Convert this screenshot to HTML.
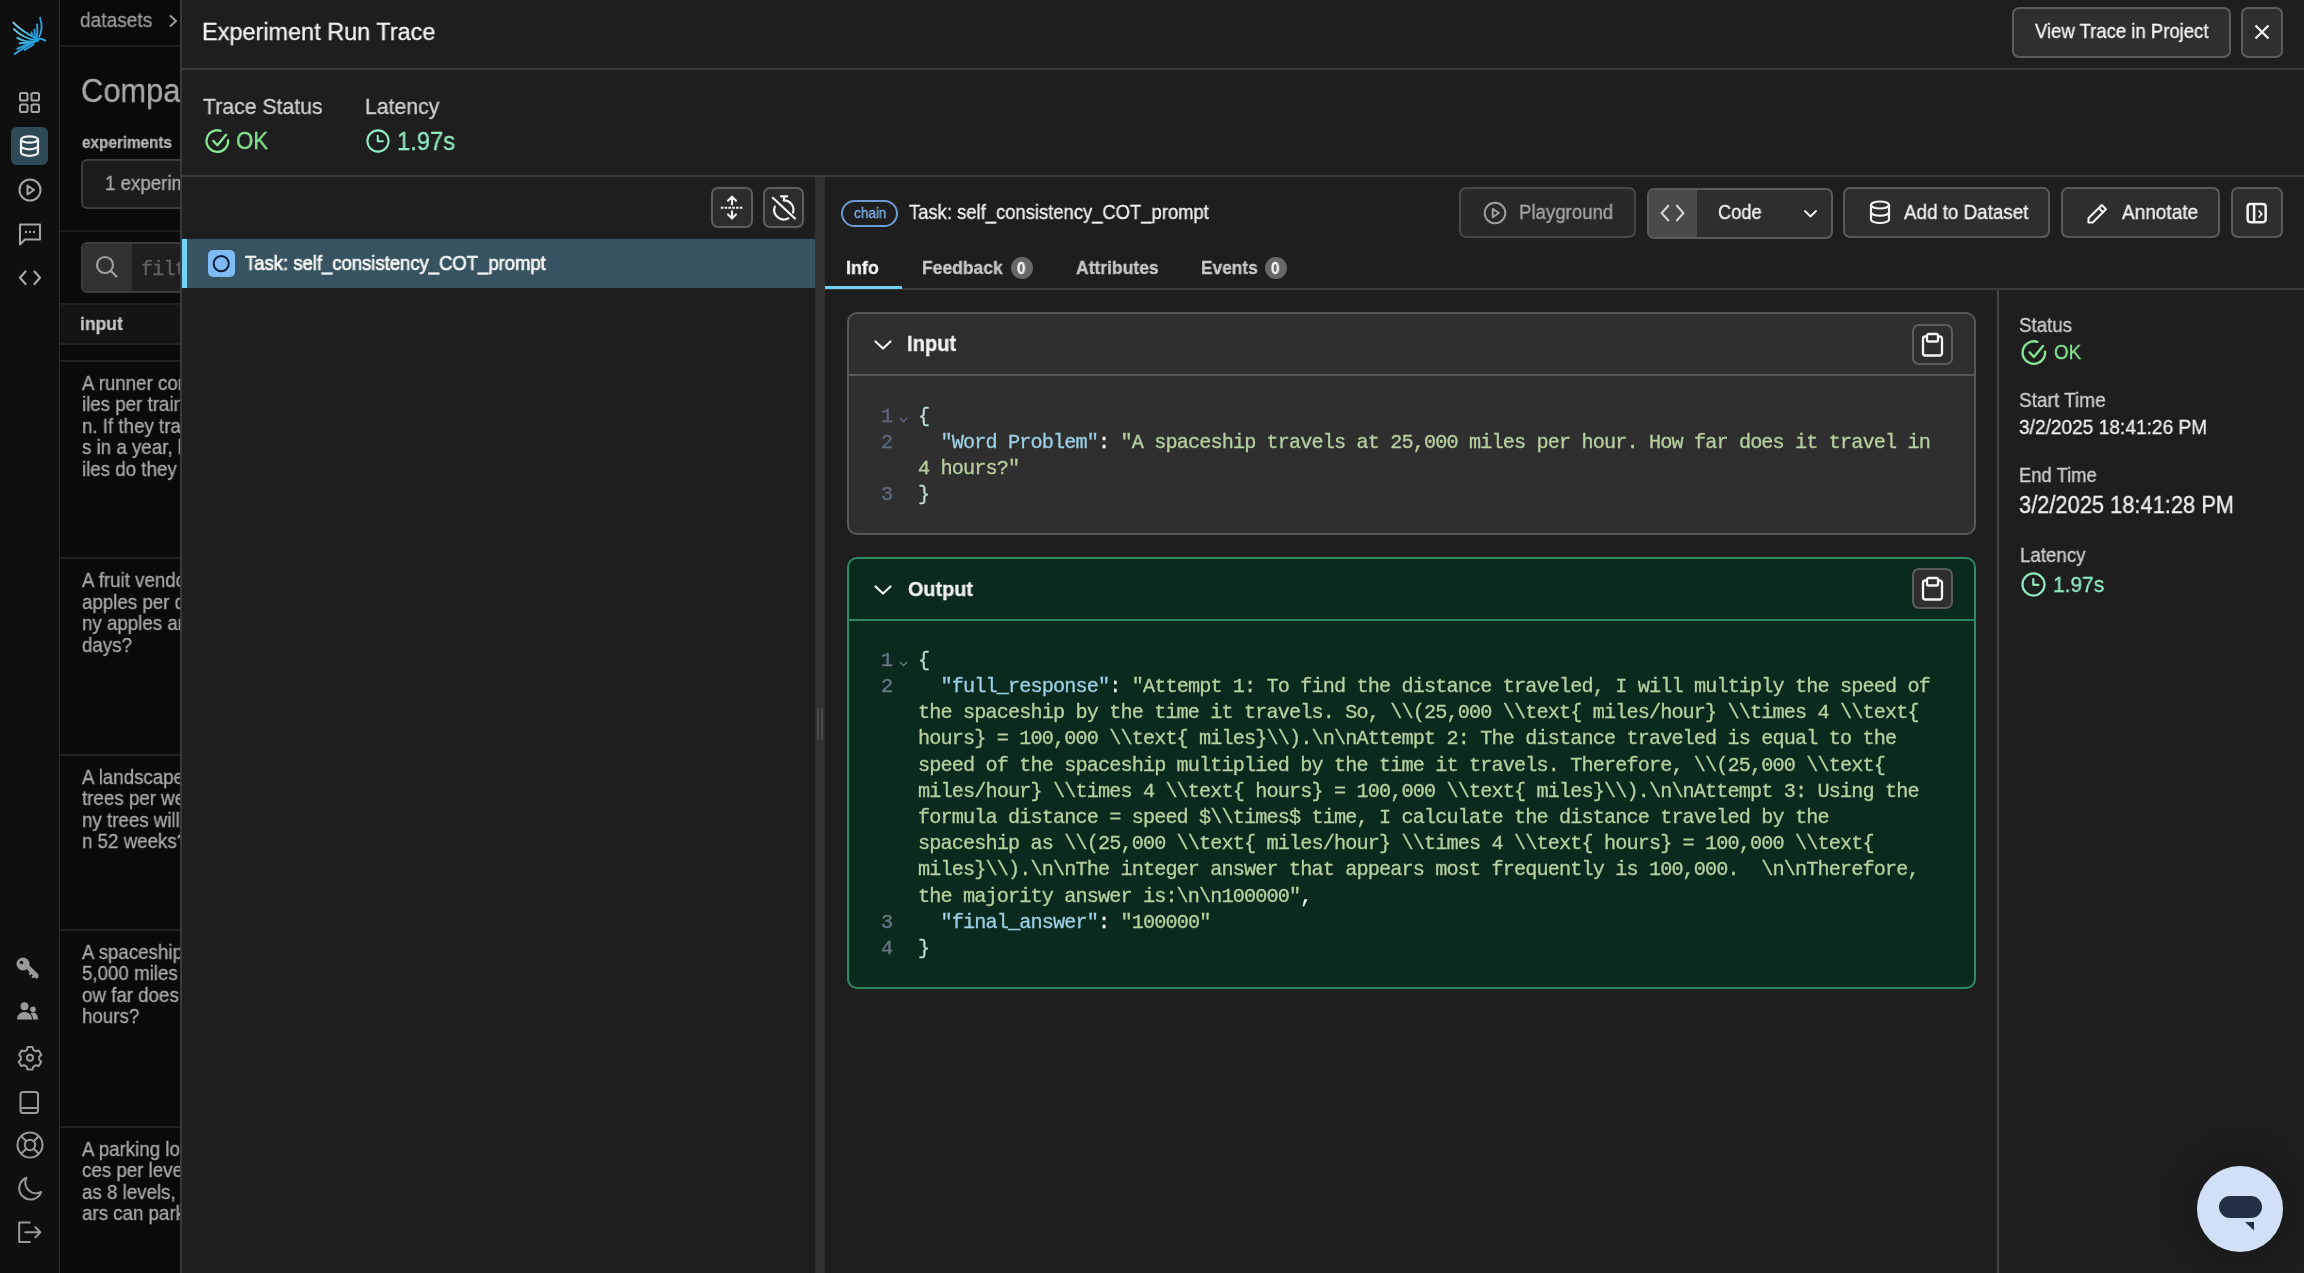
<!DOCTYPE html>
<html><head><meta charset="utf-8">
<style>
*{box-sizing:border-box;margin:0;padding:0}
html,body{width:2304px;height:1273px;overflow:hidden;background:#1e1e1e}
body{position:relative}
.t{position:absolute;white-space:pre;line-height:1;transform-origin:0 0;will-change:transform;-webkit-text-stroke:0.3px currentColor}
.s{font-family:"Liberation Sans",sans-serif}
.m{font-family:"Liberation Mono",monospace}
.b{font-weight:700}
.bm{display:inline-block;width:0;height:0}
.r{position:absolute}
svg{position:absolute;overflow:visible}
</style></head><body>
<div class="r" style="left:0px;top:0px;width:59px;height:1273px;background:#0f0f0f;border-radius:0px;"></div>
<div class="r" style="left:59px;top:0px;width:1px;height:1273px;background:#2e2e2e;border-radius:0px;"></div>
<svg style="left:5px;top:10px;" width="50" height="50" viewBox="5 10 50 50"><defs><linearGradient id="lg" x1="13" y1="22" x2="38" y2="40" gradientUnits="userSpaceOnUse"><stop offset="0" stop-color="#8bd8e6"/><stop offset="1" stop-color="#1d9fdc"/></linearGradient></defs>
<g fill="none" stroke="url(#lg)" stroke-width="1.9" stroke-linecap="round">
<path d="M13.4 22.6 C17 26.5 21 30 30.1 35.1 S35 38.3 36.7 38.9"/>
<path d="M13.9 29.2 C17 32.5 20 34.5 24 36.5 S32 39.6 35.7 40.3"/>
<path d="M17.3 37.9 C20 39.5 23 41 27 41.4 S33 41.5 35 41.3"/>
<path d="M19.4 43.4 C24 42.8 30 42.6 34.3 42.3"/>
<path d="M40.1 17.8 C41.4 22 41.8 26 41.5 29 S40.5 34.5 39.1 36.8" stroke="#2aa3dc"/>
<path d="M37 24.4 C37.6 28 37.5 33 36.7 37.5" stroke="#2aa3dc"/>
<path d="M34.4 29.6 C34.8 32 34.8 35 34.6 37.5" stroke="#2aa3dc"/>
<path d="M31.5 32.3 C31.8 33.5 32 35 32.2 36.1" stroke="#2aa3dc"/>
<path d="M37 39.6 C39.5 38.2 42 38.5 45.3 40.6" stroke="#2aa3dc"/>
<path d="M14.6 54.1 C22 48.5 29 44.5 37.5 40.3" stroke="#2aa3dc"/>
<path d="M17.3 48.9 C21 47 24.5 45.5 28.5 44" stroke="#2aa3dc"/>
<path d="M24.6 50 C27.5 48.3 30.5 46.5 33.5 44.5" stroke="#2aa3dc"/>
</g>
<circle cx="37" cy="40" r="2.2" fill="#1d9fdc"/></svg>
<svg style="left:19px;top:92px;" width="22" height="22" viewBox="0 0 22 22"><g fill="none" stroke="#a6a6a6" stroke-width="2"><rect x="1" y="1" width="7.5" height="7.5" rx="1.6"/><rect x="12.5" y="1" width="7.5" height="7.5" rx="1.6"/><rect x="1" y="12.5" width="7.5" height="7.5" rx="1.6"/><rect x="12.5" y="12.5" width="7.5" height="7.5" rx="1.6"/></g></svg>
<div class="r" style="left:11px;top:127px;width:37px;height:38px;background:#2e4a57;border-radius:6px;"></div>
<svg style="left:19px;top:135px;" width="22" height="23" viewBox="0 0 22 23"><g fill="none" stroke="#f2f2f2" stroke-width="2.2"><ellipse cx="10.5" cy="4.5" rx="8.5" ry="3.2"/><path d="M2 4.5v13c0 1.8 3.8 3.3 8.5 3.3s8.5-1.5 8.5-3.3v-13"/><path d="M2 11c0 1.8 3.8 3.3 8.5 3.3s8.5-1.5 8.5-3.3"/></g></svg>
<svg style="left:18px;top:178px;" width="24" height="24" viewBox="0 0 24 24"><g fill="none" stroke="#a6a6a6" stroke-width="2"><circle cx="12" cy="12" r="10.5"/><path d="M9.5 7.5v9l6.5-4.5z" stroke-linejoin="round"/></g></svg>
<svg style="left:18px;top:222px;" width="24" height="24" viewBox="0 0 24 24"><g fill="none" stroke="#a6a6a6" stroke-width="2" stroke-linejoin="round"><path d="M2 2.5h20v15H7l-5 5z"/></g><g fill="#a6a6a6"><circle cx="8" cy="10" r="1.2"/><circle cx="12" cy="10" r="1.2"/><circle cx="16" cy="10" r="1.2"/></g></svg>
<svg style="left:18px;top:270px;" width="24" height="16" viewBox="0 0 24 16"><g fill="none" stroke="#a6a6a6" stroke-width="2.2" stroke-linecap="round" stroke-linejoin="round"><path d="M7.5 1.5L2 7.8l5.5 6.2"/><path d="M16.5 1.5L22 7.8l-5.5 6.2"/></g></svg>
<svg style="left:16px;top:957px;" width="24" height="23" viewBox="0 0 24 23"><g fill="#9a9a9a"><circle cx="7" cy="7" r="6.5"/><path d="M9 9.5l3-2.5 10.5 10.5v2.5l-2 2-2-1.8-1.5 1.3-1.6-1.6 1.4-1.6-1.3-1.3-1.5 1.4-1.5-1.4 1.2-1.5z"/></g><circle cx="5.5" cy="5.5" r="1.8" fill="#0f0f0f"/></svg>
<svg style="left:17px;top:1002px;" width="21" height="18" viewBox="0 0 21 18"><g fill="#9a9a9a"><circle cx="7.5" cy="4.2" r="4"/><circle cx="16" cy="7.2" r="2.8"/><path d="M0 17.5c0-4.5 3.3-7.5 7.5-7.5s7.5 3 7.5 7.5z"/><path d="M13.5 11.5c1-.6 1.8-.9 2.8-.9 2.7 0 4.7 2.4 4.7 6.9h-5c0-2.4-.9-4.6-2.5-6z"/></g></svg>
<svg style="left:18px;top:1046px;" width="24" height="24" viewBox="0 0 24 24"><g fill="none" stroke="#9a9a9a" stroke-width="2" stroke-linejoin="round"><path d="M9.5 1.5h5l.8 2.9 2.6 1.5 2.9-.8 2.5 4.3-2.1 2.1v3l2.1 2.1-2.5 4.3-2.9-.8-2.6 1.5-.8 2.9h-5l-.8-2.9-2.6-1.5-2.9.8-2.5-4.3 2.1-2.1v-3L1.1 9.4l2.5-4.3 2.9.8 2.6-1.5z" transform="translate(0,-0.5) scale(1,0.98)"/><circle cx="12" cy="11.8" r="3"/></g></svg>
<svg style="left:19px;top:1091px;" width="21" height="23" viewBox="0 0 21 23"><g fill="none" stroke="#9a9a9a" stroke-width="2" stroke-linejoin="round"><rect x="1.5" y="1" width="17.5" height="21" rx="2.5"/><path d="M1.5 17h17.5"/></g></svg>
<svg style="left:16px;top:1131px;" width="28" height="28" viewBox="0 0 28 28"><g fill="none" stroke="#9a9a9a" stroke-width="2"><circle cx="14" cy="14" r="12.5"/><circle cx="14" cy="14" r="5.2"/><path d="M5.2 5.2l5.1 5.1M22.8 5.2l-5.1 5.1M5.2 22.8l5.1-5.1M22.8 22.8l-5.1-5.1"/></g></svg>
<svg style="left:17px;top:1170px;" width="25" height="31" viewBox="0 0 25 31"><g fill="none" stroke="#9a9a9a" stroke-width="2" stroke-linejoin="round"><path d="M9.4 7.7A11.3 11.3 0 1 0 24.2 22A10.8 10.8 0 0 1 9.4 7.7z"/></g></svg>
<svg style="left:17px;top:1221px;" width="25" height="23" viewBox="0 0 25 23"><g fill="none" stroke="#9a9a9a" stroke-width="2" stroke-linecap="round" stroke-linejoin="round"><path d="M12.8 1.5H2.2v19.5h10.6"/><path d="M8.2 11.3h15M18.4 6.2l5 5.1-5 5.1"/></g></svg>
<div class="r" style="left:60px;top:0px;width:121px;height:1273px;background:#0a0a0a;border-radius:0px;"></div>
<div class="t s" id="t0" style="left:80.4px;top:10.00px;font-size:20.27px;color:#9c9c9c;transform:scaleX(0.9434);"><i class="bm"></i>datasets</div>
<svg style="left:168px;top:14px;" width="10" height="14" viewBox="0 0 10 14"><path d="M2 1.5l6 5.5-6 5.5" fill="none" stroke="#9c9c9c" stroke-width="2"/></svg>
<div class="r" style="left:60px;top:45px;width:121px;height:2px;background:#1c1c1c;border-radius:0px;"></div>
<div class="t s" id="t1" style="left:80.7px;top:74.80px;font-size:32.72px;color:#a8a8a8;transform:scaleX(0.9434);"><i class="bm"></i>Compare</div>
<div class="t s b" id="t2" style="left:81.7px;top:133.51px;font-size:16.20px;color:#b4b4b4;transform:scaleX(0.9434);"><i class="bm"></i>experiments</div>
<div class="r" style="left:81px;top:159px;width:120px;height:50px;background:#1c1c1c;border:2px solid #3c3c3c;border-radius:6px;"></div>
<div class="t s" id="t3" style="left:105.0px;top:173.60px;font-size:19.85px;color:#adadad;transform:scaleX(0.9434);"><i class="bm"></i>1 experiments</div>
<div class="r" style="left:60px;top:230px;width:121px;height:2px;background:#1c1c1c;border-radius:0px;"></div>
<div class="r" style="left:81px;top:242px;width:120px;height:51px;background:#1f1f1f;border:2px solid #3c3c3c;border-radius:6px;"></div>
<div class="r" style="left:83px;top:244px;width:49px;height:47px;background:#313131;border-radius:0px;border-radius:5px 0 0 5px"></div>
<svg style="left:95px;top:255px;" width="24" height="25" viewBox="0 0 24 25"><g fill="none" stroke="#a0a0a0" stroke-width="2.2" stroke-linecap="round"><circle cx="10" cy="10" r="8"/><path d="M16 16l5.5 5.5"/></g></svg>
<div class="t m" id="t4" style="left:141.0px;top:260.00px;font-size:20.20px;color:#616161;letter-spacing:-0.9px"><i class="bm"></i>filter</div>
<div class="r" style="left:60px;top:303px;width:121px;height:2px;background:#1f1f1f;border-radius:0px;"></div>
<div class="r" style="left:60px;top:305px;width:121px;height:38px;background:#141414;border-radius:0px;"></div>
<div class="t s b" id="t5" style="left:80.4px;top:315.00px;font-size:18.56px;color:#c4c4c4;transform:scaleX(0.9434);"><i class="bm"></i>input</div>
<div class="r" style="left:60px;top:343px;width:121px;height:2px;background:#222222;border-radius:0px;"></div>
<div class="r" style="left:60px;top:360px;width:121px;height:2px;background:#222222;border-radius:0px;"></div>
<div class="t s" id="t6" style="left:81.7px;top:374.01px;font-size:19.85px;color:#a9a9a9;transform:scaleX(0.9434);"><i class="bm"></i>A runner commits</div>
<div class="t s" id="t7" style="left:81.7px;top:395.40px;font-size:19.85px;color:#a9a9a9;transform:scaleX(0.9434);"><i class="bm"></i>iles per training</div>
<div class="t s" id="t8" style="left:81.7px;top:416.80px;font-size:19.85px;color:#a9a9a9;transform:scaleX(0.9434);"><i class="bm"></i>n. If they train</div>
<div class="t s" id="t9" style="left:81.7px;top:438.21px;font-size:19.85px;color:#a9a9a9;transform:scaleX(0.9434);"><i class="bm"></i>s in a year, how</div>
<div class="t s" id="t10" style="left:81.7px;top:459.60px;font-size:19.85px;color:#a9a9a9;transform:scaleX(0.9434);"><i class="bm"></i>iles do they run</div>
<div class="t s" id="t11" style="left:81.7px;top:571.40px;font-size:19.85px;color:#a9a9a9;transform:scaleX(0.9434);"><i class="bm"></i>A fruit vendor</div>
<div class="t s" id="t12" style="left:81.7px;top:592.80px;font-size:19.85px;color:#a9a9a9;transform:scaleX(0.9434);"><i class="bm"></i>apples per day</div>
<div class="t s" id="t13" style="left:81.7px;top:614.21px;font-size:19.85px;color:#a9a9a9;transform:scaleX(0.9434);"><i class="bm"></i>ny apples are</div>
<div class="t s" id="t14" style="left:81.7px;top:635.60px;font-size:19.85px;color:#a9a9a9;transform:scaleX(0.9434);"><i class="bm"></i>days?</div>
<div class="t s" id="t15" style="left:81.7px;top:767.80px;font-size:19.85px;color:#a9a9a9;transform:scaleX(0.9434);"><i class="bm"></i>A landscaper</div>
<div class="t s" id="t16" style="left:81.7px;top:789.21px;font-size:19.85px;color:#a9a9a9;transform:scaleX(0.9434);"><i class="bm"></i>trees per week</div>
<div class="t s" id="t17" style="left:81.7px;top:810.60px;font-size:19.85px;color:#a9a9a9;transform:scaleX(0.9434);"><i class="bm"></i>ny trees will</div>
<div class="t s" id="t18" style="left:81.7px;top:832.01px;font-size:19.85px;color:#a9a9a9;transform:scaleX(0.9434);"><i class="bm"></i>n 52 weeks?</div>
<div class="t s" id="t19" style="left:81.7px;top:943.01px;font-size:19.85px;color:#a9a9a9;transform:scaleX(0.9434);"><i class="bm"></i>A spaceship</div>
<div class="t s" id="t20" style="left:81.7px;top:964.40px;font-size:19.85px;color:#a9a9a9;transform:scaleX(0.9434);"><i class="bm"></i>5,000 miles</div>
<div class="t s" id="t21" style="left:81.7px;top:985.80px;font-size:19.85px;color:#a9a9a9;transform:scaleX(0.9434);"><i class="bm"></i>ow far does</div>
<div class="t s" id="t22" style="left:81.7px;top:1007.21px;font-size:19.85px;color:#a9a9a9;transform:scaleX(0.9434);"><i class="bm"></i>hours?</div>
<div class="t s" id="t23" style="left:81.7px;top:1140.01px;font-size:19.85px;color:#a9a9a9;transform:scaleX(0.9434);"><i class="bm"></i>A parking lot</div>
<div class="t s" id="t24" style="left:81.7px;top:1161.40px;font-size:19.85px;color:#a9a9a9;transform:scaleX(0.9434);"><i class="bm"></i>ces per level</div>
<div class="t s" id="t25" style="left:81.7px;top:1182.80px;font-size:19.85px;color:#a9a9a9;transform:scaleX(0.9434);"><i class="bm"></i>as 8 levels, how</div>
<div class="t s" id="t26" style="left:81.7px;top:1204.21px;font-size:19.85px;color:#a9a9a9;transform:scaleX(0.9434);"><i class="bm"></i>ars can park</div>
<div class="r" style="left:60px;top:557px;width:121px;height:2px;background:#222222;border-radius:0px;"></div>
<div class="r" style="left:60px;top:754px;width:121px;height:2px;background:#222222;border-radius:0px;"></div>
<div class="r" style="left:60px;top:929px;width:121px;height:2px;background:#222222;border-radius:0px;"></div>
<div class="r" style="left:60px;top:1126px;width:121px;height:2px;background:#222222;border-radius:0px;"></div>
<div class="r" style="left:180px;top:0px;width:2124px;height:1273px;background:#1e1e1e;border-radius:0px;"></div>
<div class="r" style="left:180px;top:0px;width:2px;height:1273px;background:#3a3a3a;border-radius:0px;"></div>
<div class="t s" id="t27" style="left:201.9px;top:20.10px;font-size:23.95px;color:#f2f2f2;transform:scaleX(0.9804);"><i class="bm"></i>Experiment Run Trace</div>
<div class="r" style="left:2012px;top:7px;width:219px;height:51px;background:#2f2f2f;border:2px solid #5c5c5c;border-radius:7px;"></div>
<div class="t s" id="t28" style="left:2034.6px;top:22.31px;font-size:19.63px;color:#f5f5f5;transform:scaleX(0.9434);"><i class="bm"></i>View Trace in Project</div>
<div class="r" style="left:2241px;top:7px;width:42px;height:51px;background:#2f2f2f;border:2px solid #5c5c5c;border-radius:7px;"></div>
<svg style="left:2254px;top:24px;" width="16" height="16" viewBox="0 0 16 16"><path d="M1.5 1.5l13 13M14.5 1.5l-13 13" stroke="#f5f5f5" stroke-width="2.2" fill="none"/></svg>
<div class="r" style="left:182px;top:68px;width:2122px;height:2px;background:#3a3a3a;border-radius:0px;"></div>
<div class="t s" id="t29" style="left:203.1px;top:95.90px;font-size:22.53px;color:#cfcfcf;transform:scaleX(0.9434);"><i class="bm"></i>Trace Status</div>
<div class="t s" id="t30" style="left:364.8px;top:95.90px;font-size:22.53px;color:#cfcfcf;transform:scaleX(0.9434);"><i class="bm"></i>Latency</div>
<svg style="left:204.7px;top:129px;" width="24" height="24" viewBox="0 0 24 24"><g fill="none" stroke="#86e594" stroke-width="2.3" stroke-linecap="round" stroke-linejoin="round"><path d="M23.1 11.2A10.8 10.8 0 1 1 15.6 1.8"/><path d="M8.3 11.9L12.4 16.3 21.1 5.8"/></g></svg>
<div class="t s" id="t31" style="left:236.2px;top:129.81px;font-size:23.60px;color:#86e594;transform:scaleX(0.9434);"><i class="bm"></i>OK</div>
<svg style="left:366px;top:129px;" width="24" height="24" viewBox="0 0 24 24"><g fill="none" stroke="#90eac0" stroke-width="2.1" stroke-linecap="round" stroke-linejoin="round"><circle cx="12" cy="12" r="10.6"/><path d="M11.8 6.8V12.3h5"/></g></svg>
<div class="t s" id="t32" style="left:396.8px;top:128.61px;font-size:25.21px;color:#90eac0;transform:scaleX(0.9434);"><i class="bm"></i>1.97s</div>
<div class="r" style="left:182px;top:175px;width:2122px;height:2px;background:#3a3a3a;border-radius:0px;"></div>
<div class="r" style="left:711px;top:187px;width:42px;height:41px;background:#2c2c2c;border:2px solid #5e5e5e;border-radius:7px;"></div>
<div class="r" style="left:763px;top:187px;width:41px;height:41px;background:#2c2c2c;border:2px solid #5e5e5e;border-radius:7px;"></div>
<svg style="left:720px;top:194px;" width="24" height="28" viewBox="0 0 24 28"><g fill="none" stroke="#f2f2f2" stroke-width="2.1" stroke-linecap="round" stroke-linejoin="round"><path d="M12 3v7.5M8 6.8L12 2.6l4 4.2"/><path d="M12 24.4v-7M8 20.4L12 24.6l4-4.2"/></g><path d="M0.8 13.8h22.4" stroke="#f2f2f2" stroke-width="2.1" stroke-dasharray="2.6 1.2"/></svg>
<svg style="left:771px;top:194px;" width="26" height="28" viewBox="0 0 26 28"><g fill="none" stroke="#f2f2f2" stroke-width="2.2" stroke-linecap="round"><path d="M10 2.3h6.2M13 2.3v3.8"/><path d="M3.8 12.6A9.6 9.6 0 0 0 17.4 24.3"/><path d="M12.8 6.4A9.6 9.6 0 0 1 22.1 18.6"/><path d="M1.8 3.8L24 24.5"/></g></svg>
<div class="r" style="left:182px;top:239px;width:633px;height:49px;background:#37535f;border-radius:0px;"></div>
<div class="r" style="left:182px;top:239px;width:5px;height:49px;background:#70d3f7;border-radius:0px;"></div>
<div class="r" style="left:208px;top:250px;width:27px;height:27px;background:#7ebaf5;border-radius:5px;"></div>
<svg style="left:208px;top:250px;" width="27" height="27" viewBox="0 0 27 27"><circle cx="13.2" cy="13.6" r="7.6" fill="none" stroke="#0c1a33" stroke-width="1.9"/></svg>
<div class="t s" id="t33" style="left:245.3px;top:253.91px;font-size:19.58px;color:#f5f5f5;transform:scaleX(0.9434);-webkit-text-stroke:0.7px #f5f5f5"><i class="bm"></i>Task: self_consistency_COT_prompt</div>
<div class="r" style="left:815px;top:177px;width:10px;height:1096px;background:#313131;border-radius:0px;"></div>
<div class="r" style="left:817px;top:708px;width:2px;height:32px;background:#4c4c4c;border-radius:1px;"></div>
<div class="r" style="left:821px;top:708px;width:2px;height:32px;background:#4c4c4c;border-radius:1px;"></div>
<div class="r" style="left:841px;top:200px;width:57px;height:27px;background:transparent;border:2px solid #6c9bd2;border-radius:14px;"></div>
<div class="t s" id="t34" style="left:853.7px;top:206.21px;font-size:14.37px;color:#7db2ea;transform:scaleX(0.9434);"><i class="bm"></i>chain</div>
<div class="t s" id="t35" style="left:908.8px;top:203.11px;font-size:19.52px;color:#f2f2f2;transform:scaleX(0.9434);"><i class="bm"></i>Task: self_consistency_COT_prompt</div>
<div class="r" style="left:1459px;top:187px;width:177px;height:51px;background:#282828;border:2px solid #474747;border-radius:7px;"></div>
<svg style="left:1483px;top:201px;" width="24" height="24" viewBox="0 0 24 24"><g fill="none" stroke="#9e9e9e" stroke-width="2" stroke-linejoin="round"><circle cx="12" cy="12" r="10.3"/><path d="M9.8 7.8v8.4l6-4.2z"/></g></svg>
<div class="t s" id="t36" style="left:1518.6px;top:203.10px;font-size:19.74px;color:#a6a6a6;transform:scaleX(0.9434);"><i class="bm"></i>Playground</div>
<div class="r" style="left:1647px;top:188px;width:186px;height:51px;background:#2e2e2e;border:2px solid #5a5a5a;border-radius:7px;"></div>
<div class="r" style="left:1649px;top:190px;width:48px;height:47px;background:#4a4a4a;border-radius:0px;border-radius:5px 0 0 5px"></div>
<svg style="left:1660px;top:201px;" width="25" height="22" viewBox="0 0 25 22"><g fill="none" stroke="#d8d8d8" stroke-width="2.1" stroke-linecap="round" stroke-linejoin="round"><path d="M8.3 4.7L1.6 12.1l6.7 7.3"/><path d="M17 4.7l6.4 7.4-6.4 7.3"/></g></svg>
<div class="t s" id="t37" style="left:1717.6px;top:203.11px;font-size:19.31px;color:#f2f2f2;transform:scaleX(0.9434);"><i class="bm"></i>Code</div>
<svg style="left:1804px;top:210px;" width="13" height="8" viewBox="0 0 13 8"><path d="M1 1l5.5 5.5L12 1" fill="none" stroke="#f2f2f2" stroke-width="1.9" stroke-linecap="round" stroke-linejoin="round"/></svg>
<div class="r" style="left:1843px;top:187px;width:207px;height:51px;background:#2e2e2e;border:2px solid #5a5a5a;border-radius:7px;"></div>
<svg style="left:1869px;top:200px;" width="22" height="25" viewBox="0 0 22 25"><g fill="none" stroke="#f2f2f2" stroke-width="2.2"><ellipse cx="11" cy="5" rx="9" ry="3.5"/><path d="M2 5v14.5c0 1.9 4 3.5 9 3.5s9-1.6 9-3.5V5"/><path d="M2 12.2c0 1.9 4 3.5 9 3.5s9-1.6 9-3.5"/></g></svg>
<div class="t s" id="t38" style="left:1904.4px;top:203.11px;font-size:19.95px;color:#f2f2f2;transform:scaleX(0.9434);"><i class="bm"></i>Add to Dataset</div>
<div class="r" style="left:2061px;top:187px;width:159px;height:51px;background:#2e2e2e;border:2px solid #5a5a5a;border-radius:7px;"></div>
<svg style="left:2087px;top:203px;" width="21" height="21" viewBox="0 0 21 21"><g fill="none" stroke="#f2f2f2" stroke-width="2.1" stroke-linejoin="round"><path d="M1.5 19.5v-4.2L14.8 2l4.2 4.2L5.7 19.5z"/><path d="M11.8 5l4.2 4.2"/></g></svg>
<div class="t s" id="t39" style="left:2122.0px;top:202.10px;font-size:20.17px;color:#f2f2f2;transform:scaleX(0.9434);"><i class="bm"></i>Annotate</div>
<div class="r" style="left:2231px;top:187px;width:52px;height:51px;background:#2e2e2e;border:2px solid #5a5a5a;border-radius:7px;"></div>
<svg style="left:2245px;top:202px;" width="23" height="23" viewBox="0 0 23 23"><g fill="none" stroke="#f2f2f2" stroke-width="2.5" stroke-linejoin="round"><rect x="2.65" y="1.95" width="18" height="18.2" rx="2.8"/><path d="M9.1 2v18"/><path d="M14.2 9l2.6 3-2.6 3" stroke-width="1.9" stroke-linecap="round"/></g></svg>
<div class="t s b" id="t40" style="left:846.2px;top:257.81px;font-size:18.99px;color:#f5f5f5;transform:scaleX(0.9434);"><i class="bm"></i>Info</div>
<div class="t s b" id="t41" style="left:922.0px;top:258.81px;font-size:18.56px;color:#c9c9c9;transform:scaleX(0.9434);"><i class="bm"></i>Feedback</div>
<div class="r" style="left:1011px;top:257px;width:22px;height:22px;background:#686868;border-radius:11px;"></div>
<div class="t s b" id="t42" style="left:1016.5px;top:259.81px;font-size:16.09px;color:#f2f2f2;transform:scaleX(0.9434);"><i class="bm"></i>0</div>
<div class="t s b" id="t43" style="left:1075.6px;top:258.81px;font-size:18.56px;color:#c9c9c9;transform:scaleX(0.9434);"><i class="bm"></i>Attributes</div>
<div class="t s b" id="t44" style="left:1201.0px;top:258.81px;font-size:18.34px;color:#c9c9c9;transform:scaleX(0.9434);"><i class="bm"></i>Events</div>
<div class="r" style="left:1265px;top:257px;width:22px;height:22px;background:#686868;border-radius:11px;"></div>
<div class="t s b" id="t45" style="left:1270.5px;top:259.81px;font-size:16.09px;color:#f2f2f2;transform:scaleX(0.9434);"><i class="bm"></i>0</div>
<div class="r" style="left:825px;top:288px;width:1479px;height:2px;background:#3a3a3a;border-radius:0px;"></div>
<div class="r" style="left:825px;top:286px;width:77px;height:3px;background:#6fd0f2;border-radius:0px;"></div>
<div class="r" style="left:1997px;top:290px;width:2px;height:983px;background:#434343;border-radius:0px;"></div>
<div class="t s" id="t46" style="left:2019.0px;top:315.51px;font-size:19.85px;color:#cfcfcf;transform:scaleX(0.9434);"><i class="bm"></i>Status</div>
<svg style="left:2021px;top:340px;" width="25" height="25" viewBox="0 0 24 24"><g fill="none" stroke="#86e594" stroke-width="2.3" stroke-linecap="round" stroke-linejoin="round"><path d="M23.1 11.2A10.8 10.8 0 1 1 15.6 1.8"/><path d="M8.3 11.9L12.4 16.3 21.1 5.8"/></g></svg>
<div class="t s" id="t47" style="left:2053.8px;top:342.60px;font-size:19.85px;color:#86e594;transform:scaleX(0.9434);"><i class="bm"></i>OK</div>
<div class="t s" id="t48" style="left:2019.0px;top:390.01px;font-size:20.17px;color:#cfcfcf;transform:scaleX(0.9434);"><i class="bm"></i>Start Time</div>
<div class="t s" id="t49" style="left:2019.0px;top:417.21px;font-size:20.27px;color:#f0f0f0;transform:scaleX(0.9434);"><i class="bm"></i>3/2/2025 18:41:26 PM</div>
<div class="t s" id="t50" style="left:2019.1px;top:465.90px;font-size:19.52px;color:#cfcfcf;transform:scaleX(0.9434);"><i class="bm"></i>End Time</div>
<div class="t s" id="t51" style="left:2019.1px;top:493.71px;font-size:23.17px;color:#f0f0f0;transform:scaleX(0.9434);"><i class="bm"></i>3/2/2025 18:41:28 PM</div>
<div class="t s" id="t52" style="left:2019.5px;top:545.60px;font-size:19.85px;color:#cfcfcf;transform:scaleX(0.9434);"><i class="bm"></i>Latency</div>
<svg style="left:2021px;top:572px;" width="25" height="25" viewBox="0 0 24 24"><g fill="none" stroke="#90eac0" stroke-width="2.1" stroke-linecap="round" stroke-linejoin="round"><circle cx="12" cy="12" r="10.6"/><path d="M11.8 6.8V12.3h5"/></g></svg>
<div class="t s" id="t53" style="left:2053.4px;top:574.21px;font-size:22.21px;color:#90eac0;transform:scaleX(0.9434);"><i class="bm"></i>1.97s</div>
<div class="r" style="left:847px;top:312px;width:1129px;height:223px;background:#2f2f2f;border:2px solid #585858;border-radius:10px;"></div>
<div class="r" style="left:849px;top:374px;width:1125px;height:2px;background:#585858;border-radius:0px;"></div>
<svg style="left:874px;top:340px;" width="18" height="10" viewBox="0 0 18 10"><path d="M1.5 1.5l7.5 7 7.5-7" fill="none" stroke="#f2f2f2" stroke-width="2.2" stroke-linecap="round" stroke-linejoin="round"/></svg>
<div class="t s b" id="t54" style="left:907.4px;top:334.21px;font-size:21.35px;color:#f2f2f2;transform:scaleX(0.9434);"><i class="bm"></i>Input</div>
<div class="r" style="left:1912px;top:324px;width:41px;height:41px;background:#2e2e2e;border:2px solid #5c5c5c;border-radius:7px;"></div>
<svg style="left:1922px;top:333px;" width="22" height="24" viewBox="0 0 22 24"><g fill="none" stroke="#f5f5f5" stroke-width="2.3" stroke-linejoin="round"><path d="M4.5 3.5H3.3A2.3 2.3 0 0 0 1 5.8v14.4a2.3 2.3 0 0 0 2.3 2.3h14.4a2.3 2.3 0 0 0 2.3-2.3V5.8a2.3 2.3 0 0 0-2.3-2.3h-1.2"/><rect x="5" y="1" width="11" height="7.5" rx="1.5"/></g></svg>
<div class="t m" id="t55" style="left:880.5px;top:407.21px;font-size:20.20px;color:#5d6a7e;letter-spacing:-0.870px"><i class="bm"></i>1</div>
<svg style="left:899px;top:417.2px;" width="9" height="6" viewBox="0 0 9 6"><path d="M1 1l3.5 3.8L8 1" fill="none" stroke="#5d6a7e" stroke-width="1.4"/></svg>
<div class="t m" id="t56" style="left:917.5px;top:407.21px;font-size:20.2px;letter-spacing:-0.870px"><i class="bm"></i><span style="color:#b9ddd5">{</span></div>
<div class="t m" id="t57" style="left:880.5px;top:433.21px;font-size:20.20px;color:#5d6a7e;letter-spacing:-0.870px"><i class="bm"></i>2</div>
<div class="t m" id="t58" style="left:917.5px;top:433.21px;font-size:20.2px;letter-spacing:-0.870px"><i class="bm"></i><span style="color:#f2f2f2">  </span><span style="color:#9dd0e5">&quot;Word Problem&quot;</span><span style="color:#f2f2f2">: </span><span style="color:#b6d0a0">&quot;A spaceship travels at 25,000 miles per hour. How far does it travel in</span></div>
<div class="t m" id="t59" style="left:917.5px;top:459.21px;font-size:20.2px;letter-spacing:-0.870px"><i class="bm"></i><span style="color:#b6d0a0">4 hours?&quot;</span></div>
<div class="t m" id="t60" style="left:880.5px;top:485.21px;font-size:20.20px;color:#5d6a7e;letter-spacing:-0.870px"><i class="bm"></i>3</div>
<div class="t m" id="t61" style="left:917.5px;top:485.21px;font-size:20.2px;letter-spacing:-0.870px"><i class="bm"></i><span style="color:#b9ddd5">}</span></div>
<div class="r" style="left:847px;top:557px;width:1129px;height:432px;background:#0a2a1e;border:2px solid #2e8a63;border-radius:10px;"></div>
<div class="r" style="left:849px;top:619px;width:1125px;height:2px;background:#2e8a63;border-radius:0px;"></div>
<svg style="left:874px;top:585px;" width="18" height="10" viewBox="0 0 18 10"><path d="M1.5 1.5l7.5 7 7.5-7" fill="none" stroke="#f2f2f2" stroke-width="2.2" stroke-linecap="round" stroke-linejoin="round"/></svg>
<div class="t s b" id="t62" style="left:907.8px;top:577.71px;font-size:21.03px;color:#f2f2f2;transform:scaleX(0.9434);"><i class="bm"></i>Output</div>
<div class="r" style="left:1912px;top:568px;width:41px;height:41px;background:#2e2e2e;border:2px solid #5c5c5c;border-radius:7px;"></div>
<svg style="left:1922px;top:577px;" width="22" height="24" viewBox="0 0 22 24"><g fill="none" stroke="#f5f5f5" stroke-width="2.3" stroke-linejoin="round"><path d="M4.5 3.5H3.3A2.3 2.3 0 0 0 1 5.8v14.4a2.3 2.3 0 0 0 2.3 2.3h14.4a2.3 2.3 0 0 0 2.3-2.3V5.8a2.3 2.3 0 0 0-2.3-2.3h-1.2"/><rect x="5" y="1" width="11" height="7.5" rx="1.5"/></g></svg>
<div class="t m" id="t63" style="left:880.5px;top:650.81px;font-size:20.20px;color:#6b7785;letter-spacing:-0.870px"><i class="bm"></i>1</div>
<svg style="left:899px;top:660.8px;" width="9" height="6" viewBox="0 0 9 6"><path d="M1 1l3.5 3.8L8 1" fill="none" stroke="#6b7785" stroke-width="1.4"/></svg>
<div class="t m" id="t64" style="left:917.5px;top:650.81px;font-size:20.2px;letter-spacing:-0.870px"><i class="bm"></i><span style="color:#b9ddd5">{</span></div>
<div class="t m" id="t65" style="left:880.5px;top:677.01px;font-size:20.20px;color:#6b7785;letter-spacing:-0.870px"><i class="bm"></i>2</div>
<div class="t m" id="t66" style="left:917.5px;top:677.01px;font-size:20.2px;letter-spacing:-0.870px"><i class="bm"></i><span style="color:#f2f2f2">  </span><span style="color:#9dd0e5">&quot;full_response&quot;</span><span style="color:#f2f2f2">: </span><span style="color:#b6d0a0">&quot;Attempt 1: To find the distance traveled, I will multiply the speed of</span></div>
<div class="t m" id="t67" style="left:917.5px;top:703.21px;font-size:20.2px;letter-spacing:-0.870px"><i class="bm"></i><span style="color:#b6d0a0">the spaceship by the time it travels. So, \\(25,000 \\text{ miles/hour} \\times 4 \\text{</span></div>
<div class="t m" id="t68" style="left:917.5px;top:729.41px;font-size:20.2px;letter-spacing:-0.870px"><i class="bm"></i><span style="color:#b6d0a0">hours} = 100,000 \\text{ miles}\\).\n\nAttempt 2: The distance traveled is equal to the</span></div>
<div class="t m" id="t69" style="left:917.5px;top:755.60px;font-size:20.2px;letter-spacing:-0.870px"><i class="bm"></i><span style="color:#b6d0a0">speed of the spaceship multiplied by the time it travels. Therefore, \\(25,000 \\text{</span></div>
<div class="t m" id="t70" style="left:917.5px;top:781.81px;font-size:20.2px;letter-spacing:-0.870px"><i class="bm"></i><span style="color:#b6d0a0">miles/hour} \\times 4 \\text{ hours} = 100,000 \\text{ miles}\\).\n\nAttempt 3: Using the</span></div>
<div class="t m" id="t71" style="left:917.5px;top:808.01px;font-size:20.2px;letter-spacing:-0.870px"><i class="bm"></i><span style="color:#b6d0a0">formula distance = speed $\\times$ time, I calculate the distance traveled by the</span></div>
<div class="t m" id="t72" style="left:917.5px;top:834.21px;font-size:20.2px;letter-spacing:-0.870px"><i class="bm"></i><span style="color:#b6d0a0">spaceship as \\(25,000 \\text{ miles/hour} \\times 4 \\text{ hours} = 100,000 \\text{</span></div>
<div class="t m" id="t73" style="left:917.5px;top:860.41px;font-size:20.2px;letter-spacing:-0.870px"><i class="bm"></i><span style="color:#b6d0a0">miles}\\).\n\nThe integer answer that appears most frequently is 100,000.  \n\nTherefore,</span></div>
<div class="t m" id="t74" style="left:917.5px;top:886.60px;font-size:20.2px;letter-spacing:-0.870px"><i class="bm"></i><span style="color:#b6d0a0">the majority answer is:\n\n100000&quot;</span><span style="color:#f2f2f2">,</span></div>
<div class="t m" id="t75" style="left:880.5px;top:912.81px;font-size:20.20px;color:#6b7785;letter-spacing:-0.870px"><i class="bm"></i>3</div>
<div class="t m" id="t76" style="left:917.5px;top:912.81px;font-size:20.2px;letter-spacing:-0.870px"><i class="bm"></i><span style="color:#f2f2f2">  </span><span style="color:#9dd0e5">&quot;final_answer&quot;</span><span style="color:#f2f2f2">: </span><span style="color:#b6d0a0">&quot;100000&quot;</span></div>
<div class="t m" id="t77" style="left:880.5px;top:939.01px;font-size:20.20px;color:#6b7785;letter-spacing:-0.870px"><i class="bm"></i>4</div>
<div class="t m" id="t78" style="left:917.5px;top:939.01px;font-size:20.2px;letter-spacing:-0.870px"><i class="bm"></i><span style="color:#b9ddd5">}</span></div>
<div class="r" style="left:2154px;top:1122px;width:172px;height:172px;border-radius:50%;background:radial-gradient(circle,rgba(0,0,0,0.12) 40%,rgba(0,0,0,0) 70%)"></div>
<div class="r" style="left:2197px;top:1166px;width:86px;height:86px;background:#d1e0f7;border-radius:43px;"></div>
<div class="r" style="left:2219px;top:1196px;width:43px;height:22px;background:#232f42;border-radius:11px;"></div>
<svg style="left:2245px;top:1222px;" width="10" height="10" viewBox="0 0 10 10"><path d="M0 0h9v8.5z" fill="#232f42"/></svg>
</body></html>
